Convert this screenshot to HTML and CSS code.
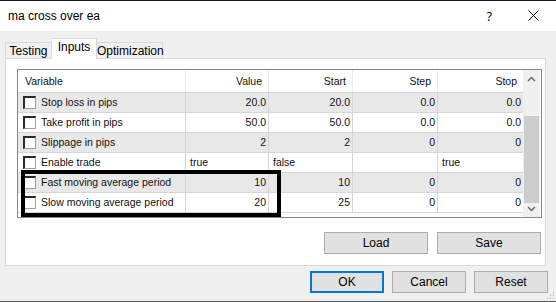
FILE: index.html
```html
<!DOCTYPE html>
<html lang="en">
<head>
    <meta charset="UTF-8">
    <meta name="viewport" content="width=device-width, initial-scale=1.0">
    <title>ma cross over ea</title>
    <link rel="stylesheet" href="styles.css">
</head>
<body>
    <div class="window">
        <div class="titlebar">
            <span class="title">ma cross over ea</span>
            <span class="help">?</span>
            <svg class="close" width="11" height="11" viewBox="0 0 11 11">
                <path d="M0.5 0.5 L10.5 10.5 M10.5 0.5 L0.5 10.5" stroke="#000" stroke-width="1"/>
            </svg>
        </div>

        <div class="content">
            <div class="tabs">
                <div class="tab testing">Testing</div>
                <div class="tab active">Inputs</div>
                <div class="tab optimization">Optimization</div>
            </div>

            <div class="panel">
                <div class="grid">
                    <div class="grid-body">
                        <div class="row head">
                            <div class="cell name">Variable</div>
                            <div class="cell num">Value</div>
                            <div class="cell num">Start</div>
                            <div class="cell num">Step</div>
                            <div class="cell num last">Stop</div>
                        </div>
                        <div class="row alt">
                            <div class="cell name"><span class="check"></span>Stop loss in pips</div>
                            <div class="cell num">20.0</div>
                            <div class="cell num">20.0</div>
                            <div class="cell num">0.0</div>
                            <div class="cell num last">0.0</div>
                        </div>
                        <div class="row">
                            <div class="cell name"><span class="check"></span>Take profit in pips</div>
                            <div class="cell num">50.0</div>
                            <div class="cell num">50.0</div>
                            <div class="cell num">0.0</div>
                            <div class="cell num last">0.0</div>
                        </div>
                        <div class="row alt">
                            <div class="cell name"><span class="check"></span>Slippage in pips</div>
                            <div class="cell num">2</div>
                            <div class="cell num">2</div>
                            <div class="cell num">0</div>
                            <div class="cell num last">0</div>
                        </div>
                        <div class="row">
                            <div class="cell name"><span class="check"></span>Enable trade</div>
                            <div class="cell">true</div>
                            <div class="cell">false</div>
                            <div class="cell"></div>
                            <div class="cell last">true</div>
                        </div>
                        <div class="row alt">
                            <div class="cell name"><span class="check"></span>Fast moving average period</div>
                            <div class="cell num">10</div>
                            <div class="cell num">10</div>
                            <div class="cell num">0</div>
                            <div class="cell num last">0</div>
                        </div>
                        <div class="row">
                            <div class="cell name"><span class="check"></span>Slow moving average period</div>
                            <div class="cell num">20</div>
                            <div class="cell num">25</div>
                            <div class="cell num">0</div>
                            <div class="cell num last">0</div>
                        </div>
                    </div>

                    <div class="scrollbar">
                        <div class="arrow">
                            <svg width="9" height="6" viewBox="0 0 9 6"><path d="M1 5 L4.5 1.5 L8 5" fill="none" stroke="#606060" stroke-width="1.3"/></svg>
                        </div>
                        <div class="track-top"></div>
                        <div class="thumb"></div>
                        <div class="arrow down">
                            <svg width="9" height="6" viewBox="0 0 9 6"><path d="M1 1 L4.5 4.5 L8 1" fill="none" stroke="#606060" stroke-width="1.3"/></svg>
                        </div>
                    </div>

                    <div class="highlight"></div>
                </div>

                <div class="file-buttons">
                    <button class="btn wide">Load</button>
                    <button class="btn wide">Save</button>
                </div>
            </div>

            <div class="footer">
                <button class="btn primary">OK</button>
                <button class="btn">Cancel</button>
                <button class="btn">Reset</button>
            </div>
        </div>

        <svg class="grip" width="8" height="8" viewBox="0 0 8 8">
            <rect x="6" y="0" width="1" height="1" fill="#aaa"/>
            <rect x="3" y="3" width="1" height="1" fill="#aaa"/>
            <rect x="6" y="3" width="1" height="1" fill="#aaa"/>
            <rect x="0" y="6" width="1" height="1" fill="#aaa"/>
            <rect x="3" y="6" width="1" height="1" fill="#aaa"/>
            <rect x="6" y="6" width="1" height="1" fill="#aaa"/>
        </svg>
    </div>
</body>
</html>
```

FILE: styles.css
```css
body {
    margin: 0;
    padding: 0;
    font-family: "Liberation Sans", Arial, sans-serif;
    background-color: #f0f0f0;
}
.window {
    position: relative;
    width: 556px;
    height: 302px;
    box-sizing: border-box;
    background-color: #f0f0f0;
    border-top: 1px solid #1b1b1b;
    border-bottom: 1px solid #5c5c5c;
    overflow: hidden;
}
.titlebar {
    height: 30px;
    background-color: #fff;
    display: flex;
    align-items: center;
    padding-left: 8px;
    font-size: 12px;
    color: #000;
}
.title {
    flex: 1;
    margin-top: -1px;
}
.help {
    font-family: "Open Sans", sans-serif;
    font-size: 13px;
    margin-right: 36px;
    margin-top: -1px;
}
.close {
    margin-right: 17px;
    margin-top: -1px;
}
.content {
    padding: 7px 0 0 5px;
}
.tabs {
    display: flex;
    height: 20px;
    font-size: 12px;
}
.tab {
    margin-top: 4px;
    height: 16px;
    box-sizing: border-box;
    border: 1px solid #d9d9d9;
    border-bottom: none;
    background-color: #f0f0f0;
    text-align: center;
    line-height: 17px;
    color: #000;
}
.tab.testing {
    width: 47px;
}
.tab.optimization {
    width: 66px;
    border-left: none;
}
.tab.active {
    width: 45px;
    margin-top: 0;
    height: 21px;
    margin-bottom: -1px;
    background-color: #fff;
    border-left: none;
    line-height: 16px;
    position: relative;
    z-index: 1;
}
.panel {
    width: 541px;
    height: 208px;
    box-sizing: border-box;
    border: 1px solid #d9d9d9;
    background-color: #fff;
    padding: 10px 0 0 11px;
}
.grid {
    position: relative;
    display: flex;
    width: 525px;
    height: 149px;
    box-sizing: border-box;
    border: 1px solid #828790;
    font-size: 10.5px;
    color: #111;
}
.grid-body {
    width: 505px;
}
.row {
    display: flex;
    height: 20px;
    box-sizing: border-box;
    border-bottom: 1px solid #d6d6d6;
}
.row.alt {
    background-color: #e8e8e8;
}
.row.head {
    height: 23px;
}
.cell {
    box-sizing: border-box;
    border-right: 1px solid #d6d6d6;
    padding: 0 4px;
    line-height: 19px;
    white-space: nowrap;
    overflow: hidden;
    width: 84px;
}
.cell:nth-child(2) {
    width: 83px;
}
.cell:nth-child(4),
.cell:nth-child(5) {
    width: 85px;
}
.cell.name {
    width: 168px;
    padding-left: 5px;
    display: flex;
    align-items: center;
}
.cell.num {
    text-align: right;
    padding-right: 2px;
}
.cell.last {
    border-right: none;
}
.head .cell {
    border-right-color: #ececec;
    line-height: 23px;
}
.head .cell.name {
    padding-left: 7px;
}
.head .cell.num {
    padding-right: 6px;
}
.check {
    display: inline-block;
    width: 13px;
    height: 13px;
    box-sizing: border-box;
    background-color: #fff;
    border-top: 2px solid #2a2a2a;
    border-left: 2px solid #2a2a2a;
    border-right: 1px solid #a0a0a0;
    border-bottom: 1px solid #a0a0a0;
    margin-right: 5px;
    flex: none;
}
.scrollbar {
    width: 17px;
    display: flex;
    flex-direction: column;
    background-color: #f0f0f0;
}
.arrow {
    height: 17px;
    display: flex;
    align-items: center;
    justify-content: center;
}
.arrow.down {
    height: 14px;
    align-items: flex-start;
    padding-top: 3px;
    box-sizing: border-box;
}
.track-top {
    height: 29px;
}
.thumb {
    flex: 1;
    margin: 0 1px;
    background-color: #cdcdcd;
}
.highlight {
    position: absolute;
    left: 3px;
    top: 100px;
    width: 260px;
    height: 47px;
    box-sizing: border-box;
    border: 4px solid #000;
}
.file-buttons {
    display: flex;
    justify-content: flex-end;
    gap: 9px;
    margin-top: 14px;
    padding-right: 4px;
}
.btn {
    height: 22px;
    width: 74px;
    box-sizing: border-box;
    background-color: #e1e1e1;
    border: 1px solid #adadad;
    border-radius: 0;
    font-family: "Liberation Sans", Arial, sans-serif;
    font-size: 12px;
    color: #000;
    padding: 0;
    line-height: 18px;
}
.btn.wide {
    width: 104px;
}
.btn.primary {
    border: 2px solid #0078d7;
}
.footer {
    display: flex;
    justify-content: flex-end;
    gap: 8px;
    margin-top: 5px;
    padding-right: 8px;
}
.grip {
    position: absolute;
    right: 1px;
    bottom: 1px;
}
```
